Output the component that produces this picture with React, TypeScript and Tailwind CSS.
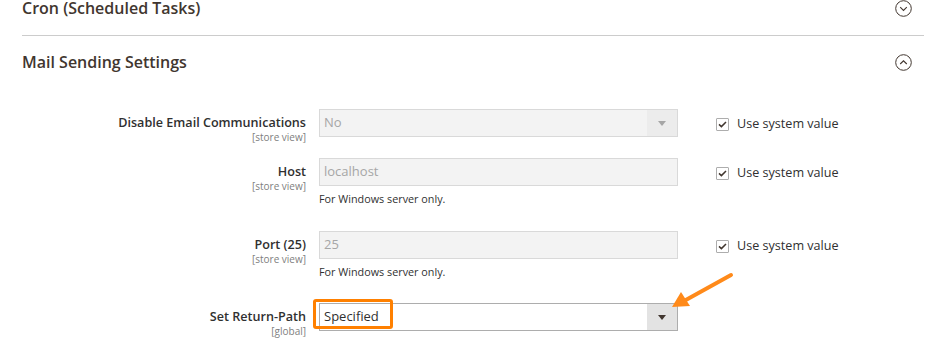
import React from "react";

function Chevron({ up = false }: { up?: boolean }) {
  return (
    <svg width="17" height="17" viewBox="0 0 17 17" className="shrink-0">
      <circle cx="8.5" cy="8.5" r="7.8" fill="none" stroke="#41362f" strokeWidth="1" />
      {up ? (
        <path d="M5.2 10 L8.5 6.8 L11.8 10" fill="none" stroke="#41362f" strokeWidth="1.1" />
      ) : (
        <path d="M5.2 7.2 L8.5 10.4 L11.8 7.2" fill="none" stroke="#41362f" strokeWidth="1.1" />
      )}
    </svg>
  );
}

function Label({ title, scope }: { title: string; scope: string }) {
  return (
    <div className="w-[284px] shrink-0 pt-[6px] text-right">
      <div className="text-[12.6px] leading-[16px] font-semibold text-[#303030]">{title}</div>
      <div className="text-[10px] leading-[12px] text-[#808080]">{scope}</div>
    </div>
  );
}

function UseSystem() {
  return (
    <div className="ml-[38px] mt-[1px] flex h-[28px] items-center gap-[8px]">
      <div className="flex h-[13px] w-[13px] items-center justify-center rounded-[1px] border border-[#adadad] bg-white">
        <svg width="9" height="7" viewBox="0 0 9 7">
          <path d="M1 3.4 L3.4 5.6 L8 1" fill="none" stroke="#41362f" strokeWidth="1.5" />
        </svg>
      </div>
      <span className="text-[12.6px] text-[#303030]">Use system value</span>
    </div>
  );
}

function Note() {
  return <div className="mt-[6px] text-[10.8px] leading-[14px] text-[#303030]">For Windows server only.</div>;
}

export default function App() {
  return (
    <div className="relative h-[348px] w-[951px] overflow-hidden bg-white font-['Open_Sans',sans-serif]">
      {/* Cron header, cut off at the top */}
      <div className="mx-[22px] mr-[27px] flex h-[36px] items-start justify-between border-b border-[#cccccc] pr-[12px]">
        <span className="-mt-[2px] text-[16px] leading-[20px] font-semibold text-[#41362f]">Cron (Scheduled Tasks)</span>
        <Chevron />
      </div>

      {/* Mail Sending Settings */}
      <div className="mx-[22px] mr-[27px] flex items-center justify-between pt-[16px] pr-[12px]">
        <span className="text-[16px] leading-[20px] font-semibold text-[#41362f]">Mail Sending Settings</span>
        <Chevron up />
      </div>

      <div className="ml-[22px] mt-[37px] flex items-start">
        <Label title="Disable Email Communications" scope="[store view]" />
        <div className="ml-[13px] flex h-[28px] w-[359px] items-center border border-[#d9d9d9] bg-[#f3f3f3]">
          <span className="flex-1 pl-[4px] text-[13px] text-[#a6a6a6]">No</span>
          <div className="flex h-full w-[30px] items-center justify-center bg-[#ececec]">
            <div className="h-0 w-0 border-x-[4px] border-t-[5px] border-x-transparent border-t-[#a6a6a6]" />
          </div>
        </div>
        <UseSystem />
      </div>

      <div className="ml-[22px] mt-[15px] flex items-start">
        <Label title="Host" scope="[store view]" />
        <div className="ml-[13px] w-[359px]">
          <div className="flex h-[28px] items-center border border-[#d9d9d9] bg-[#f3f3f3] pl-[4px] text-[13px] text-[#a6a6a6]">
            localhost
          </div>
          <Note />
        </div>
        <UseSystem />
      </div>

      <div className="ml-[22px] mt-[25px] flex items-start">
        <Label title="Port (25)" scope="[store view]" />
        <div className="ml-[13px] w-[359px]">
          <div className="flex h-[28px] items-center border border-[#d9d9d9] bg-[#f3f3f3] pl-[4px] text-[13px] text-[#a6a6a6]">
            25
          </div>
          <Note />
        </div>
        <UseSystem />
      </div>

      <div className="ml-[22px] mt-[24px] flex items-start">
        <Label title="Set Return-Path" scope="[global]" />
        <div className="relative ml-[13px] flex h-[28px] w-[359px] items-center border border-[#adadad] bg-white">
          <span className="flex-1 pl-[4px] text-[13px] text-[#303030]">Specified</span>
          <div className="flex h-full w-[30px] items-center justify-center bg-[#e3e3e3]">
            <div className="h-0 w-0 border-x-[4px] border-t-[5px] border-x-transparent border-t-[#41362f]" />
          </div>
          <div className="absolute left-[-7px] top-[-5px] h-[30px] w-[80px] rounded-[3px] border-[3px] border-[#ff8000]" />
        </div>
      </div>

      {/* annotation arrow */}
      <svg className="pointer-events-none absolute left-0 top-0" width="951" height="348">
        <line x1="731" y1="275" x2="684" y2="301" stroke="#ff8a1a" strokeWidth="4" strokeLinecap="round" />
        <polygon points="672,307 681,292 690,306" fill="#ff8a1a" />
      </svg>
    </div>
  );
}
